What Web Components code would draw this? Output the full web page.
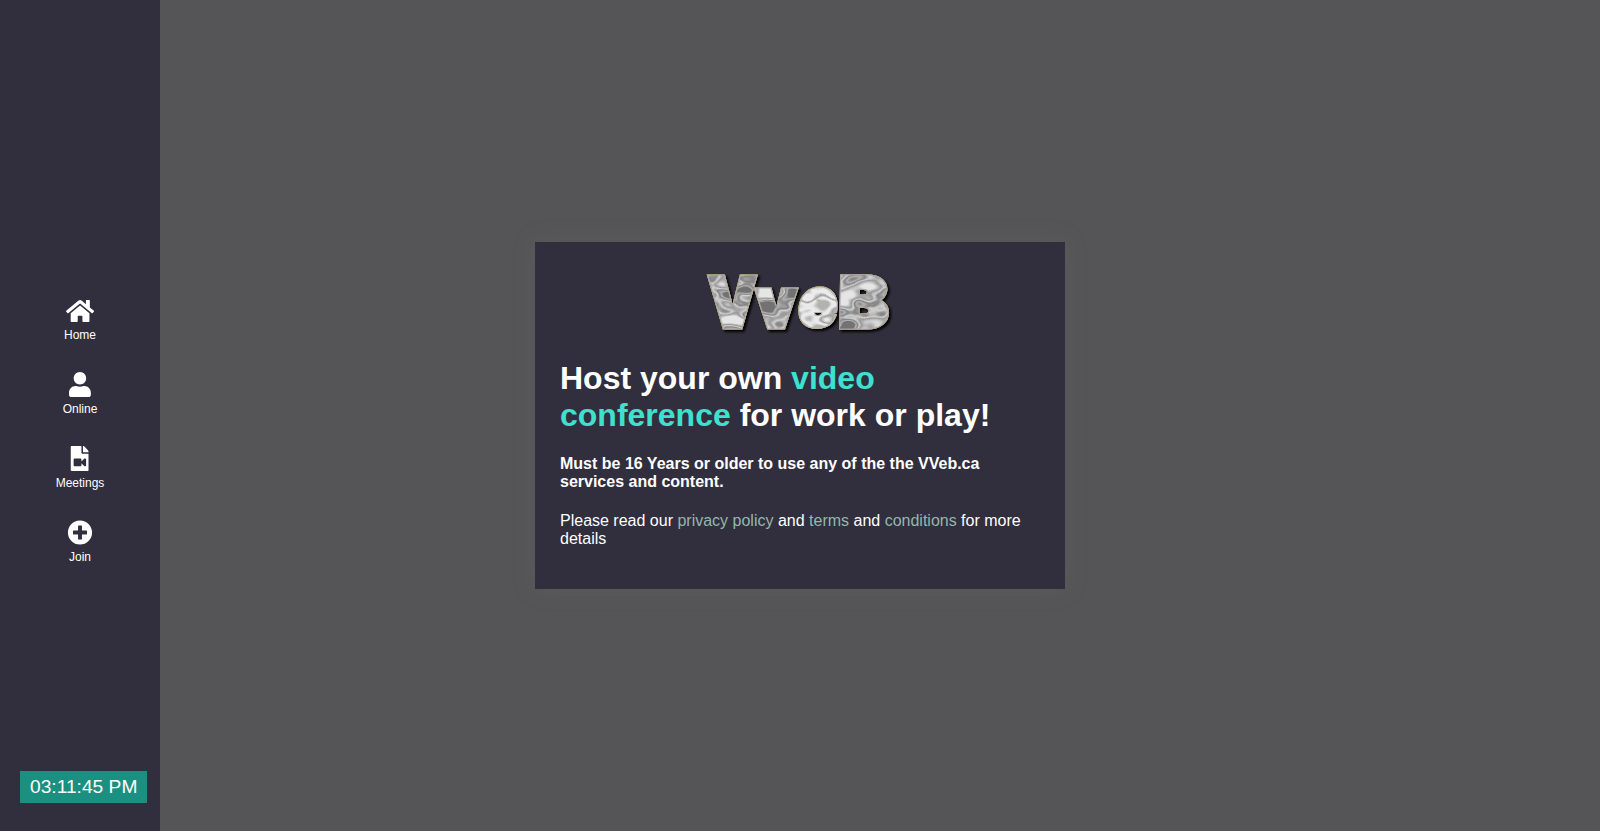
<!DOCTYPE html>
<html lang="en">
<head>
<meta charset="utf-8">
<title>VVeb.ca</title>
<style>
html,body{margin:0;height:100%}
body{background:#555557;font-family:"Liberation Sans",Arial,sans-serif;color:#fff;overflow:hidden}
</style>
</head>
<body>
<vv-app>
  <vv-sidebar slot="side">
    <vv-nav-item icon="home">Home</vv-nav-item>
    <vv-nav-item icon="user">Online</vv-nav-item>
    <vv-nav-item icon="meet">Meetings</vv-nav-item>
    <vv-nav-item icon="plus">Join</vv-nav-item>
    <vv-clock slot="foot">03:11:45 PM</vv-clock>
  </vv-sidebar>
  <vv-card></vv-card>
</vv-app>
<script>
const define = (name, html) => customElements.define(name, class extends HTMLElement {
  constructor() {
    super();
    this.attachShadow({mode: 'open'}).innerHTML = typeof html === 'function' ? html(this) : html;
  }
});

const icons = {
  home: ['0 0 576 512', 'M280.37 148.26L96 300.11V464a16 16 0 0 0 16 16l112.06-.29a16 16 0 0 0 15.92-16V368a16 16 0 0 1 16-16h64a16 16 0 0 1 16 16v95.64a16 16 0 0 0 16 16.05L464 480a16 16 0 0 0 16-16V300L295.67 148.26a12.19 12.19 0 0 0-15.3 0zM571.6 251.47L488 182.56V44.05a12 12 0 0 0-12-12h-56a12 12 0 0 0-12 12v72.61L318.47 43a48 48 0 0 0-61 0L4.34 251.47a12 12 0 0 0-1.6 16.9l25.5 31A12 12 0 0 0 45.15 301l235.22-193.74a12.19 12.19 0 0 1 15.3 0L530.9 301a12 12 0 0 0 16.9-1.6l25.5-31a12 12 0 0 0-1.7-16.93z'],
  user: ['0 0 448 512', 'M224 256c70.700 0 128-57.300 128-128S294.700 0 224 0 96 57.300 96 128s57.300 128 128 128zm89.600 32h-16.700c-22.200 10.200-46.900 16-72.900 16s-50.600-5.800-72.900-16h-16.700C60.200 288 0 348.200 0 422.400V464c0 26.500 21.500 48 48 48h352c26.500 0 48-21.500 48-48v-41.600c0-74.200-60.200-134.400-134.400-134.400z'],
  meet: ['0 0 384 512', 'M384 121.941V128H256V0h6.059c6.365 0 12.470 2.529 16.971 7.029l97.941 97.941A24.005 24.005 0 0 1 384 121.941zM224 136V0H24C10.745 0 0 10.745 0 24v464c0 13.255 10.745 24 24 24h336c13.255 0 24-10.745 24-24V160H248c-13.200 0-24-10.800-24-24zm96 144.016v111.963c0 21.445-25.943 31.998-40.971 16.971L224 353.941V392c0 13.255-10.745 24-24 24H88c-13.255 0-24-10.745-24-24V280c0-13.255 10.745-24 24-24h112c13.255 0 24 10.745 24 24v38.059l55.029-55.013c15.011-15.010 40.971-4.491 40.971 16.970z'],
  plus: ['0 0 512 512', 'M256 8C119 8 8 119 8 256s111 248 248 248 248-111 248-248S393 8 256 8zm144 276c0 6.600-5.400 12-12 12h-92v92c0 6.600-5.400 12-12 12h-56c-6.600 0-12-5.400-12-12v-92h-92c-6.600 0-12-5.400-12-12v-56c0-6.600 5.400-12 12-12h92v-92c0-6.600 5.400-12 12-12h56c6.600 0 12 5.400 12 12v92h92c6.600 0 12 5.400 12 12v56z']
};

define('vv-nav-item', el => {
  const [box, d] = icons[el.getAttribute('icon')];
  return `<style>
    :host{display:flex;flex-direction:column;align-items:center;height:44px;font-size:12px;line-height:14px}
    svg{display:block;height:25px;margin-bottom:5px;fill:#fff}
    :host([icon=home]) svg{transform:translateY(.5px)}
    :host([icon=plus]) svg,:host([icon=meet]) svg{transform:translateX(-.5px)}
  </style><svg viewBox="${box}"><path d="${d}"/></svg><span><slot></slot></span>`;
});

define('vv-clock', `<style>
  :host{display:block;box-sizing:border-box;width:127px;height:32px;line-height:32px;padding-left:10px;font-size:19.2px;background:#1b8f80;color:#fff;white-space:nowrap}
</style><slot></slot>`);

define('vv-sidebar', `<style>
  :host{display:grid;grid-template-rows:1fr auto 1fr;width:160px;height:100%;background:#312e3d;box-sizing:border-box}
  nav{grid-row:2;display:flex;flex-direction:column;gap:30px;padding-top:30px}
  footer{grid-row:3;align-self:end;padding:0 0 28px 20px}
</style><nav><slot></slot></nav><footer><slot name="foot"></slot></footer>`);

define('vv-logo', `<style>
  :host{display:block;width:190px;height:64px}
  svg{display:block;overflow:visible}
  text{font-family:Inter,"Liberation Sans",sans-serif;font-weight:900;font-size:60px;fill:#fff;stroke:#fff;stroke-width:4.500;stroke-linejoin:miter;stroke-miterlimit:3}
  .e{stroke-width:4px}
</style>
<svg width="190" height="64" viewBox="705 270 190 64">
  <defs>
    <filter id="chrome" filterUnits="userSpaceOnUse" x="695" y="262" width="210" height="80" color-interpolation-filters="sRGB">
      <feTurbulence type="fractalNoise" baseFrequency=".035 .06" numOctaves="2" seed="11"/>
      <feColorMatrix values="3 0 0 0 -1  3 0 0 0 -1  3 0 0 0 -1  0 0 0 0 1"/>
      <feComponentTransfer>
        <feFuncR type="table" tableValues=".45 .7 .52 .82 .6 .75 .9"/>
        <feFuncG type="table" tableValues=".45 .7 .52 .82 .6 .75 .9"/>
        <feFuncB type="table" tableValues=".45 .7 .52 .82 .6 .75 .9"/>
      </feComponentTransfer>
      <feGaussianBlur stdDeviation=".5" result="metal"/>
      <feMorphology in="SourceAlpha" operator="erode" radius="1" result="core"/>
      <feComposite in="metal" in2="core" operator="in" result="face"/>
      <feFlood flood-color="#aaa9a4"/>
      <feComposite in2="SourceAlpha" operator="in" result="edge"/>
      <feGaussianBlur in="SourceAlpha" stdDeviation=".45"/>
      <feComponentTransfer result="wide"><feFuncA type="linear" slope="2.200"/></feComponentTransfer>
      <feFlood flood-color="#9a8248"/>
      <feComposite in2="wide" operator="in" result="rim"/>
      <feOffset in="wide" dx="2" dy="2"/>
      <feGaussianBlur stdDeviation="1.3"/>
      <feColorMatrix values="0 0 0 0 0  0 0 0 0 0  0 0 0 0 0  0 0 0 .9 0" result="shade"/>
      <feMerge><feMergeNode in="shade"/><feMergeNode in="rim"/><feMergeNode in="edge"/><feMergeNode in="face"/></feMerge>
    </filter>
    <filter id="silver" filterUnits="userSpaceOnUse" x="780" y="270" width="80" height="70" color-interpolation-filters="sRGB">
      <feTurbulence type="fractalNoise" baseFrequency=".03 .05" numOctaves="2" seed="4"/>
      <feColorMatrix values="3 0 0 0 -1  3 0 0 0 -1  3 0 0 0 -1  0 0 0 0 1"/>
      <feComponentTransfer>
        <feFuncR type="table" tableValues=".7 .9 .93 .62 .93 .92 .8"/>
        <feFuncG type="table" tableValues=".7 .9 .93 .62 .93 .92 .8"/>
        <feFuncB type="table" tableValues=".7 .9 .93 .62 .93 .92 .8"/>
      </feComponentTransfer>
      <feGaussianBlur stdDeviation=".5" result="metal"/>
      <feMorphology in="SourceAlpha" operator="erode" radius="1" result="core"/>
      <feComposite in="metal" in2="core" operator="in" result="face"/>
      <feFlood flood-color="#b5b3aa"/>
      <feComposite in2="SourceAlpha" operator="in" result="edge"/>
      <feGaussianBlur in="SourceAlpha" stdDeviation=".45"/>
      <feComponentTransfer result="wide"><feFuncA type="linear" slope="2.200"/></feComponentTransfer>
      <feFlood flood-color="#9a8248"/>
      <feComposite in2="wide" operator="in" result="rim"/>
      <feOffset in="wide" dx="2" dy="2"/>
      <feGaussianBlur stdDeviation="1.3"/>
      <feColorMatrix values="0 0 0 0 0  0 0 0 0 0  0 0 0 0 0  0 0 0 .9 0" result="shade"/>
      <feMerge><feMergeNode in="shade"/><feMergeNode in="rim"/><feMergeNode in="edge"/><feMergeNode in="face"/></feMerge>
    </filter>
  </defs>
  <g filter="url(#chrome)"><text transform="translate(708.500 326.500) scale(1 1.15)">V</text></g>
  <g filter="url(#chrome)"><text transform="translate(756.500 326.500) scale(1.04 1.12)">v</text></g>
  <g filter="url(#silver)"><text class="e" transform="translate(797 326) skewX(-5) scale(1.060 1.120)">e</text></g>
  <g filter="url(#chrome)"><text transform="translate(838.500 326.500) skewX(-1) scale(1.230 1.15)">B</text></g>
</svg>`);

define('vv-card', `<style>
  :host{display:block;box-sizing:border-box;width:530px;height:347px;padding:28px 25px 0;background:#312e3d;box-shadow:0 0 20px rgba(110,110,110,.3)}
  vv-logo{margin:0 auto}
  h1{margin:26px 0 0;font-size:32px;line-height:37px}
  h4{margin:21px 0 0;font-size:16px;line-height:18px}
  p{margin:21px 0 0;font-size:16px;line-height:18px}
  h1 span{color:#40e0d0}
  a{color:#94b8ad}
</style>
<vv-logo></vv-logo>
<h1>Host your own <span>video conference</span> for work or play!</h1>
<h4>Must be 16 Years or older to use any of the the VVeb.ca services and content.</h4>
<p>Please read our <a>privacy policy</a> and <a>terms</a> and <a>conditions</a> for more details</p>`);

define('vv-app', `<style>
  :host{display:flex;height:831px}
  main{flex:1;display:flex;align-items:center;justify-content:center;padding-right:160px}
</style><slot name="side"></slot><main><slot></slot></main>`);
</script>
</body>
</html>
